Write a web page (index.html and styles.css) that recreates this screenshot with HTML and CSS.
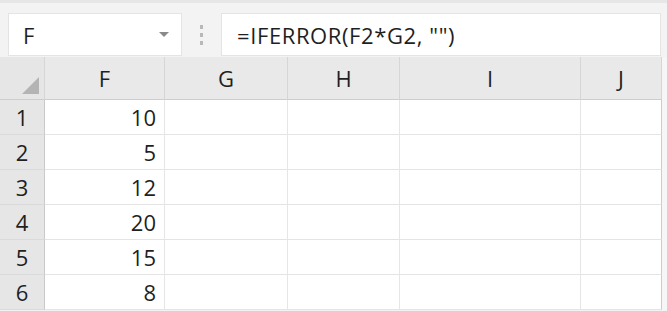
FILE: index.html
```html
<!DOCTYPE html>
<html>
<head>
  <title>Hoja de calculo</title>
  <link rel="stylesheet" href="styles.css">
</head>
<body>
  <div class="toolbar">
    <div class="name-box">
      <span>F</span>
      <span class="arrow"></span>
    </div>
    <div class="grip">
      <span></span><span></span><span></span>
    </div>
    <div class="formula-box">=IFERROR(F2*G2, "")</div>
  </div>

  <div class="sheet">
    <div class="corner"><span class="tri"></span></div>
    <div class="col-head">F</div>
    <div class="col-head">G</div>
    <div class="col-head">H</div>
    <div class="col-head">I</div>
    <div class="col-head">J</div>

    <div class="row-head">1</div><div class="cell num">10</div><div class="cell"></div><div class="cell"></div><div class="cell"></div><div class="cell"></div>
    <div class="row-head">2</div><div class="cell num">5</div><div class="cell"></div><div class="cell"></div><div class="cell"></div><div class="cell"></div>
    <div class="row-head">3</div><div class="cell num">12</div><div class="cell"></div><div class="cell"></div><div class="cell"></div><div class="cell"></div>
    <div class="row-head">4</div><div class="cell num">20</div><div class="cell"></div><div class="cell"></div><div class="cell"></div><div class="cell"></div>
    <div class="row-head">5</div><div class="cell num">15</div><div class="cell"></div><div class="cell"></div><div class="cell"></div><div class="cell"></div>
    <div class="row-head">6</div><div class="cell num">8</div><div class="cell"></div><div class="cell"></div><div class="cell"></div><div class="cell"></div>
  </div>
</body>
</html>
```

FILE: styles.css
```css
* {
  box-sizing: border-box;
}

body {
  margin: 0;
  width: 667px;
  height: 311px;
  overflow: hidden;
  background-color: #f3f3f3;
  color: #1f1f1f;
  font-family: "Open Sans", "Noto Sans", sans-serif;
  font-size: 22px;
}

.toolbar {
  display: flex;
  height: 57px;
  padding: 10px 6px 1px 8px;
  border-top: 3px solid #e6e6e6;
}

.name-box {
  width: 174px;
  display: flex;
  align-items: center;
  justify-content: space-between;
  padding: 0 12px 0 14px;
  background-color: #fff;
  border: 1px solid #e4e4e4;
}

.arrow {
  width: 0;
  height: 0;
  border-left: 5px solid transparent;
  border-right: 5px solid transparent;
  border-top: 5px solid #8a8a8a;
}

.grip {
  width: 39px;
  display: flex;
  flex-direction: column;
  align-items: center;
  justify-content: center;
  gap: 4px;
}

.grip span {
  width: 3px;
  height: 4px;
  background-color: #b8b8b8;
}

.formula-box {
  flex: 1;
  display: flex;
  align-items: center;
  padding-left: 15px;
  letter-spacing: 0.6px;
  background-color: #fff;
  border: 1px solid #e4e4e4;
}

.sheet {
  display: grid;
  grid-template-columns: 45px 120px 123px 112px 181px 81px;
  grid-template-rows: 43px repeat(6, 35px);
  width: 667px;
  border-right: 5px solid #f6f6f6;
}

.corner,
.col-head,
.row-head {
  display: flex;
  align-items: center;
  justify-content: center;
  background-color: #e9e9e9;
  border-right: 1px solid #d6d6d6;
  border-bottom: 1px solid #cdcdcd;
}

.corner {
  position: relative;
  background-color: #e6e6e6;
}

.tri {
  position: absolute;
  right: 5px;
  bottom: 5px;
  width: 0;
  height: 0;
  border-left: 17px solid transparent;
  border-bottom: 17px solid #b4b4b4;
}

.row-head {
  background-color: #e6e6e6;
  border-bottom: 1px solid #dadada;
  border-right: 1px solid #c9c9c9;
}

.cell {
  background-color: #fff;
  border-right: 1px solid #e6e6e6;
  border-bottom: 1px solid #e4e4e4;
}

.cell:nth-child(6n) {
  border-right: 1px solid #cccccc;
}

.num {
  display: flex;
  align-items: center;
  justify-content: flex-end;
  padding-right: 8px;
}
```
